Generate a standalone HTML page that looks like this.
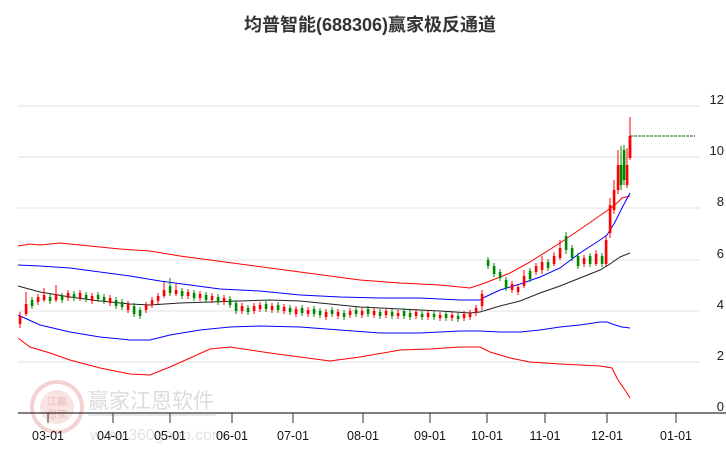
<!DOCTYPE html><html><head><meta charset="utf-8"><style>
html,body{margin:0;padding:0;background:#fff;width:726px;height:450px;overflow:hidden}
svg{display:block}
</style></head><body>
<svg width="726" height="450" xmlns="http://www.w3.org/2000/svg" font-family="Liberation Sans, Noto Sans CJK SC, sans-serif">
<text x="370" y="31" text-anchor="middle" font-size="18" font-weight="bold" fill="#333" font-family="Liberation Sans, Noto Sans CJK SC, sans-serif">均普智能(688306)赢家极反通道</text>
<g stroke="#e2e2e2" stroke-width="1">
<line x1="18" y1="106" x2="700" y2="106"/><line x1="18" y1="157" x2="700" y2="157"/><line x1="18" y1="208" x2="700" y2="208"/><line x1="18" y1="260" x2="700" y2="260"/><line x1="18" y1="311" x2="700" y2="311"/><line x1="18" y1="362" x2="700" y2="362"/>
</g>
<g font-size="13" fill="#222" text-anchor="end">
<text x="724" y="104">12</text><text x="724" y="155">10</text><text x="724" y="206">8</text><text x="724" y="258">6</text><text x="724" y="309">4</text><text x="724" y="360">2</text><text x="724" y="411">0</text>
</g>
<g opacity="0.35">
<circle cx="57" cy="407" r="25" fill="none" stroke="#e28080" stroke-width="4"/>
<circle cx="57" cy="407" r="17" fill="#f0b0b0"/>
<text x="57" y="405" text-anchor="middle" font-size="10" fill="#c04040">江赢</text>
<text x="57" y="418" text-anchor="middle" font-size="10" fill="#c04040">恩家</text>
<text x="88" y="408" font-size="21" fill="#999">赢家江恩软件</text>
<rect x="88" y="414" width="128" height="2" fill="#bbb"/>
<text x="90" y="440" font-size="16" fill="#aaa">www.360gann.com</text>
</g>
<line x1="18" y1="413" x2="726" y2="413" stroke="#333" stroke-width="1.2"/>
<g stroke="#333" stroke-width="1">
<line x1="48" y1="413" x2="48" y2="423"/><line x1="113" y1="413" x2="113" y2="423"/><line x1="170" y1="413" x2="170" y2="423"/><line x1="232" y1="413" x2="232" y2="423"/><line x1="293" y1="413" x2="293" y2="423"/><line x1="363" y1="413" x2="363" y2="423"/><line x1="430" y1="413" x2="430" y2="423"/><line x1="487" y1="413" x2="487" y2="423"/><line x1="545" y1="413" x2="545" y2="423"/><line x1="607" y1="413" x2="607" y2="423"/><line x1="676" y1="413" x2="676" y2="423"/>
</g>
<g font-size="12.5" fill="#111" text-anchor="middle">
<text x="48" y="440">03-01</text><text x="113" y="440">04-01</text><text x="170" y="440">05-01</text><text x="232" y="440">06-01</text><text x="293" y="440">07-01</text><text x="363" y="440">08-01</text><text x="430" y="440">09-01</text><text x="487" y="440">10-01</text><text x="545" y="440">11-01</text><text x="607" y="440">12-01</text><text x="676" y="440">01-01</text>
</g>
<g fill="none" stroke-width="1">
<polyline stroke="#f00" points="18,246 30,244 40,245 60,243 90,246 120,249 150,251 180,256 210,260 240,264 270,268 300,272 330,276 360,280 400,283 440,285 470,288 485,283 510,273 530,262 560,243 585,226 605,212 615,205 622,198 630,196"/>
<polyline stroke="#00f" points="18,265 40,266 70,268 100,272 130,276 160,281 190,285 220,289 260,291 300,295 340,297 380,298 420,298 460,300 480,300 485,297 500,290 520,284 540,277 560,268 580,253 600,240 607,235 615,222 622,208 630,193"/>
<polyline stroke="#222" points="18,286 40,292 70,297 100,301 130,304 150,305 180,303 210,302 240,301 270,300 300,301 330,304 360,307 400,309 440,311 470,313 480,312 500,306 520,301 540,293 560,286 580,278 600,270 610,264 620,257 630,253"/>
<polyline stroke="#00f" points="18,315 40,325 70,332 100,337 130,340 150,340 170,335 200,330 230,327 260,326 300,327 340,330 380,333 420,333 460,331 480,331 500,332 520,332 540,330 560,327 580,325 600,322 607,322 615,325 622,327 630,328"/>
<polyline stroke="#f00" points="18,338 30,347 50,353 70,360 100,368 130,374 150,375 170,367 190,358 210,349 230,347 250,350 270,353 300,357 330,361 360,357 400,350 430,349 460,347 480,347 490,352 510,358 530,362 560,364 600,366 612,368 618,380 625,390 630,398"/>
</g>
<line x1="630" y1="136" x2="695" y2="136" stroke="#060" stroke-dasharray="3,1" stroke-width="1"/>
<!-- red candles wicks -->
<path stroke="#f00" stroke-width="1" fill="none" d="M20 312v16M26 292v24M38 294v11M44 288v14M56 285v17M68 290v11M80 290v11M92 293v11M110 295v11M128 301v12M146 302v11M152 297v11M158 293v11M164 282v16M176 284v12M188 289v10M200 291v10M212 293v10M224 295v10M242 303v11M254 303v11M260 302v10M272 303v10M284 304v10M296 306v11M308 307v10M326 309v11M338 309v10M350 308v10M362 308v10M374 308v10M386 308v10M398 310v9M416 309v10M428 310v10M440 312v9M452 312v9M464 311v10M470 310v10M476 305v11M482 290v20M512 281v12M518 284v11M524 270v18M536 263v12M542 256v18M554 252v14M560 240v20M584 255v12M596 250v16M606 236v30M610 198v40M614 180v34M618 150v44M627 148v40M630 117v43"/>
<path fill="#f00" d="M18.8 316h2.6v8h-2.6zM24.8 304h2.6v10h-2.6zM36.8 297h2.6v5h-2.6zM42.8 295h2.6v5h-2.6zM54.8 294h2.6v6h-2.6zM66.8 293h2.6v5h-2.6zM78.8 293h2.6v5h-2.6zM90.8 296h2.6v5h-2.6zM108.8 298h2.6v5h-2.6zM126.8 304h2.6v6h-2.6zM144.8 305h2.6v5h-2.6zM150.8 300h2.6v5h-2.6zM156.8 296h2.6v5h-2.6zM162.8 290h2.6v6h-2.6zM174.8 290h2.6v4h-2.6zM186.8 292h2.6v4h-2.6zM198.8 294h2.6v4h-2.6zM210.8 296h2.6v4h-2.6zM222.8 298h2.6v4h-2.6zM240.8 306h2.6v5h-2.6zM252.8 306h2.6v5h-2.6zM258.8 305h2.6v4h-2.6zM270.8 306h2.6v4h-2.6zM282.8 307h2.6v4h-2.6zM294.8 309h2.6v5h-2.6zM306.8 310h2.6v4h-2.6zM324.8 312h2.6v5h-2.6zM336.8 312h2.6v4h-2.6zM348.8 311h2.6v4h-2.6zM360.8 311h2.6v4h-2.6zM372.8 311h2.6v4h-2.6zM384.8 311h2.6v4h-2.6zM396.8 313h2.6v3h-2.6zM414.8 312h2.6v4h-2.6zM426.8 313h2.6v4h-2.6zM438.8 315h2.6v3h-2.6zM450.8 315h2.6v3h-2.6zM462.8 314h2.6v4h-2.6zM468.8 313h2.6v4h-2.6zM474.8 308h2.6v5h-2.6zM480.8 294h2.6v12h-2.6zM510.8 284h2.6v6h-2.6zM516.8 287h2.6v5h-2.6zM522.8 276h2.6v10h-2.6zM534.8 266h2.6v6h-2.6zM540.8 262h2.6v8h-2.6zM552.8 256h2.6v8h-2.6zM558.8 248h2.6v10h-2.6zM582.8 258h2.6v6h-2.6zM594.8 254h2.6v10h-2.6zM604.8 240h2.6v24h-2.6zM608.8 205h2.6v28h-2.6zM612.8 190h2.6v20h-2.6zM616.8 165h2.6v25h-2.6zM625.8 165h2.6v20h-2.6zM628.6 136h2.8v22h-2.8z"/>
<!-- green candles -->
<path stroke="#080" stroke-width="1" fill="none" d="M32 297v12M50 294v10M62 293v10M74 291v10M86 292v10M98 292v10M104 294v10M116 297v12M122 299v11M134 303v14M140 307v12M170 278v18M182 288v11M194 290v11M206 292v11M218 294v11M230 296v12M236 300v14M248 305v10M266 301v11M278 302v11M290 305v10M302 305v11M314 306v11M320 308v10M332 307v10M344 310v10M356 307v10M368 306v11M380 309v10M392 309v10M404 308v11M410 310v10M422 311v9M434 311v9M446 311v10M458 313v9M488 257v12M494 263v14M500 269v12M506 277v14M530 268v14M548 259v12M566 232v22M572 245v16M578 253v16M590 253v14M602 253v14M621 146v44M624 145v40"/>
<path fill="#080" d="M30.8 300h2.6v6h-2.6zM48.8 297h2.6v4h-2.6zM60.8 296h2.6v4h-2.6zM72.8 294h2.6v4h-2.6zM84.8 295h2.6v4h-2.6zM96.8 295h2.6v4h-2.6zM102.8 297h2.6v4h-2.6zM114.8 300h2.6v6h-2.6zM120.8 302h2.6v5h-2.6zM132.8 306h2.6v8h-2.6zM138.8 310h2.6v6h-2.6zM168.8 286h2.6v7h-2.6zM180.8 291h2.6v5h-2.6zM192.8 293h2.6v5h-2.6zM204.8 295h2.6v5h-2.6zM216.8 297h2.6v5h-2.6zM228.8 299h2.6v6h-2.6zM234.8 303h2.6v8h-2.6zM246.8 308h2.6v4h-2.6zM264.8 304h2.6v5h-2.6zM276.8 305h2.6v5h-2.6zM288.8 308h2.6v4h-2.6zM300.8 308h2.6v5h-2.6zM312.8 309h2.6v5h-2.6zM318.8 311h2.6v4h-2.6zM330.8 310h2.6v4h-2.6zM342.8 313h2.6v4h-2.6zM354.8 310h2.6v4h-2.6zM366.8 309h2.6v5h-2.6zM378.8 312h2.6v4h-2.6zM390.8 312h2.6v4h-2.6zM402.8 311h2.6v5h-2.6zM408.8 313h2.6v4h-2.6zM420.8 314h2.6v3h-2.6zM432.8 314h2.6v3h-2.6zM444.8 314h2.6v4h-2.6zM456.8 316h2.6v3h-2.6zM486.8 260h2.6v6h-2.6zM492.8 266h2.6v8h-2.6zM498.8 272h2.6v6h-2.6zM504.8 280h2.6v8h-2.6zM528.8 271h2.6v8h-2.6zM546.8 262h2.6v6h-2.6zM564.8 236h2.6v14h-2.6zM570.8 248h2.6v10h-2.6zM576.8 256h2.6v10h-2.6zM588.8 256h2.6v8h-2.6zM600.8 256h2.6v8h-2.6zM619.8 165h2.6v20h-2.6zM622.8 150h2.6v30h-2.6z"/>
</svg>
</body></html>
